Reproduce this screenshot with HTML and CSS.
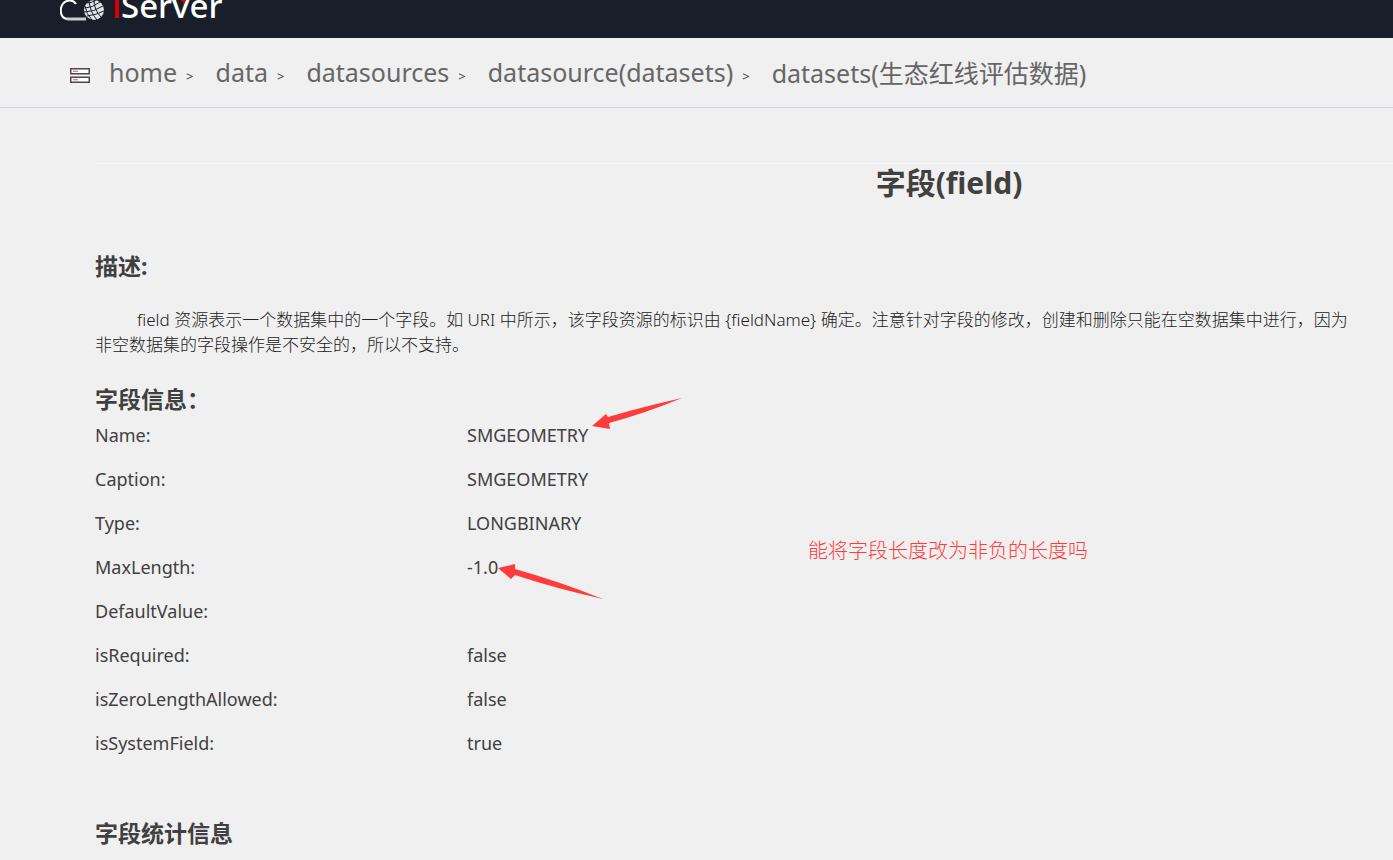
FILE: index.html
```html
<!DOCTYPE html>
<html lang="zh-CN">
  <head>
    <meta charset="UTF-8" />
    <meta name="viewport" content="width=device-width, initial-scale=1.0" />
    <title>字段(field)</title>
    <link rel="stylesheet" href="styles.css">
  </head>
  <body>
    <header class="header">
      <svg class="logo" width="170" height="38" viewBox="0 0 170 38" role="img" aria-label="iServer">
        <!-- cloud -->
        <path d="M16 4 C12 -2 3 0 1 8 C0 15 3 19 8 19" fill="none" stroke="#fff" stroke-width="2" />
        <path d="M7 19 H26" fill="none" stroke="#c4d0d0" stroke-width="3" />
        <!-- globe -->
        <circle cx="34" cy="10" r="10" fill="#dfe3e4" />
        <g fill="none" stroke="#181f2a" stroke-width="1">
          <path d="M25 8 Q32 8 40 2 M24 12 Q34 12 43 6 M27 16 Q36 15 44 11 M27 3 Q32 3 36 0" />
          <path d="M29 1 Q30 12 37 20 M34 0 Q34 10 41 17 M25 6 Q26 14 32 20" />
        </g>
        <rect x="55" y="0" width="4" height="18" fill="#d80000" />
        <text x="61" y="18" class="logo-text">Server</text>
        <path d="M121 0 H126 L124 4 Z" fill="#d80000" />
      </svg>
    </header>

    <nav class="breadcrumb">
      <svg class="server-icon" width="20" height="15" viewBox="0 0 20 15">
        <rect x="0.75" y="0.75" width="18.5" height="5" fill="#fff" stroke="#4a4a4a" stroke-width="1.5" />
        <rect x="0.75" y="9.25" width="18.5" height="5" fill="#fff" stroke="#4a4a4a" stroke-width="1.5" />
        <path d="M3 3.2 H8 M3 11.8 H8" stroke="#f04848" />
      </svg>
      <a href="#">home</a><span class="sep">&gt;</span>
      <a href="#">data</a><span class="sep">&gt;</span>
      <a href="#">datasources</a><span class="sep">&gt;</span>
      <a href="#">datasource(datasets)</a><span class="sep">&gt;</span>
      <a href="#">datasets(生态红线评估数据)</a>
    </nav>

    <main class="content">
      <h1>字段(field)</h1>

      <h2>描述:</h2>
      <p class="desc">field 资源表示一个数据集中的一个字段。如 URI 中所示，该字段资源的标识由 {fieldName} 确定。注意针对字段的修改，创建和删除只能在空数据集中进行，因为<br />非空数据集的字段操作是不安全的，所以不支持。</p>

      <h2>字段信息：</h2>
      <table class="info">
        <tr><th scope="row">Name:</th><td>SMGEOMETRY</td></tr>
        <tr><th scope="row">Caption:</th><td>SMGEOMETRY</td></tr>
        <tr><th scope="row">Type:</th><td>LONGBINARY</td></tr>
        <tr><th scope="row">MaxLength:</th><td>-1.0</td></tr>
        <tr><th scope="row">DefaultValue:</th><td></td></tr>
        <tr><th scope="row">isRequired:</th><td>false</td></tr>
        <tr><th scope="row">isZeroLengthAllowed:</th><td>false</td></tr>
        <tr><th scope="row">isSystemField:</th><td>true</td></tr>
      </table>

      <h2>字段统计信息</h2>
    </main>

    <!-- notes drawn over the page -->
    <svg class="arrow arrow-name" width="91" height="32" viewBox="0 0 91 32">
      <path d="M0 28 L14 16 L16 19 Q50 9 90 0 Q54 15 17 25 L18 31 Z" fill="#ff3b3b" />
    </svg>
    <svg class="arrow arrow-length" width="106" height="36" viewBox="0 0 106 36">
      <path d="M0 4 L17 0 L17 5 Q60 17 105 35 Q56 24 17 11 L13 15 Z" fill="#ff3b3b" />
    </svg>
    <p class="note">能将字段长度改为非负的长度吗</p>
  </body>
</html>
```

FILE: styles.css
```css
* {
  box-sizing: border-box;
}

body {
  margin: 0;
  position: relative;
  overflow: hidden;
  font-family: "Noto Sans", "Noto Sans CJK SC", sans-serif;
  font-size: 18px;
  color: #404040;
  background-color: #f0f0f0;
}

.header {
  height: 38px;
  padding-left: 60px;
  background-color: #181f2a;
}

.logo {
  display: block;
}

.logo-text {
  font-size: 33px;
  font-weight: 500;
  fill: #fff;
}

.breadcrumb {
  display: flex;
  align-items: center;
  height: 70px;
  padding: 0 0 2px 70px;
  border-bottom: 1px solid #ccd6e6;
  white-space: nowrap;
}

.breadcrumb a {
  color: #666;
  font-size: 25px;
  text-decoration: none;
}

.server-icon {
  margin: 8px 19px 0 0;
  flex-shrink: 0;
}

.sep {
  margin: 8px 22px 0 9px;
  font-size: 13px;
}

.content {
  min-width: 1708px;
  margin: 55px 0 0 95px;
  border-top: 1px solid #f5f5f5;
}

h1 {
  margin: 0;
  line-height: 38px;
  font-size: 30px;
  text-align: center;
}

h2 {
  margin: 46px 0 0;
  line-height: 36px;
  font-size: 23px;
}

.desc {
  margin: 23px 0 0;
  line-height: 25px;
  font-size: 17px;
  font-weight: 300;
  color: #222;
  text-indent: 42px;
  white-space: nowrap;
}

.desc + h2 {
  margin-top: 24px;
}

.info {
  border-collapse: collapse;
}

.info th,
.info td {
  height: 44px;
  padding: 0;
  font-weight: normal;
  text-align: left;
  vertical-align: top;
  line-height: 36px;
}

.info th {
  width: 372px;
}

.arrow {
  position: absolute;
}

.arrow-name {
  left: 592px;
  top: 398px;
}

.arrow-length {
  left: 498px;
  top: 564px;
}

.note {
  position: absolute;
  left: 808px;
  top: 537px;
  margin: 0;
  line-height: 28px;
  font-family: "Liberation Serif", "Noto Sans CJK SC", serif;
  font-size: 20px;
  font-weight: 300;
  color: #ff3b3b;
}
```
